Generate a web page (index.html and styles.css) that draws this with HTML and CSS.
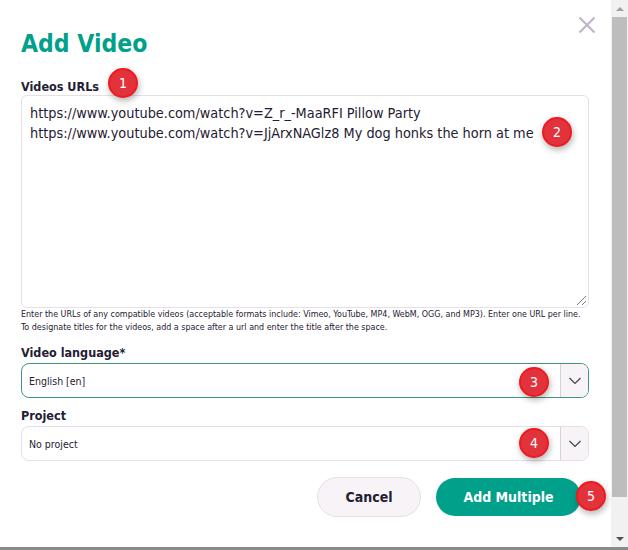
FILE: index.html
```html
<!DOCTYPE html>
<html lang="en">
<head>
<meta charset="utf-8">
<title>Add Video</title>
<link rel="stylesheet" href="styles.css">
</head>
<body>
<div class="viewport">
  <div class="modal">
    <button class="close" aria-label="Close">
      <svg width="18" height="18" viewBox="0 0 18 18"><path d="M1.5 1.5L16.5 16.5M16.5 1.5L1.5 16.5"/></svg>
    </button>
    <h1 class="title">Add Video</h1>
    <label class="label label-urls">Videos URLs</label>
    <div class="textarea">
      <div class="line">https://www.youtube.com/watch?v=Z_r_-MaaRFI Pillow Party</div>
      <div class="line">https://www.youtube.com/watch?v=JjArxNAGlz8 My dog honks the horn at me</div>
      <svg class="grip" width="11" height="11" viewBox="0 0 11 11"><path d="M1 10L10 1M6 10L10 6"/></svg>
    </div>
    <p class="help">Enter the URLs of any compatible videos (acceptable formats include: Vimeo, YouTube, MP4, WebM, OGG, and MP3). Enter one URL per line. To designate titles for the videos, add a space after a url and enter the title after the space.</p>
    <label class="label label-lang">Video language*</label>
    <div class="select select-active">
      <span class="select-value">English [en]</span>
      <span class="select-arrow"><svg width="14" height="8" viewBox="0 0 14 8"><path d="M1.5 1L7 6.5L12.5 1"/></svg></span>
    </div>
    <label class="label label-project">Project</label>
    <div class="select">
      <span class="select-value">No project</span>
      <span class="select-arrow"><svg width="14" height="8" viewBox="0 0 14 8"><path d="M1.5 1L7 6.5L12.5 1"/></svg></span>
    </div>
    <div class="actions">
      <button class="btn btn-cancel">Cancel</button>
      <button class="btn btn-primary">Add Multiple</button>
    </div>
    <span class="badge badge-1">1</span>
    <span class="badge badge-2">2</span>
    <span class="badge badge-3">3</span>
    <span class="badge badge-4">4</span>
    <span class="badge badge-5">5</span>
  </div>
  <div class="scrollbar">
    <span class="arrow arrow-up"></span>
    <span class="thumb"></span>
    <span class="arrow arrow-down"></span>
  </div>
</div>
</body>
</html>
```
FILE: styles.css
```css
* { box-sizing: border-box; }
html, body { margin: 0; padding: 0; height: 100%; overflow: hidden; }
body {
  background: #8a8a8a;
  font-family: "DejaVu Sans", sans-serif;
  font-stretch: condensed;
  color: #1f2033;
}
.viewport {
  display: flex;
  width: 628px;
  height: 547px;
  background: #fff;
}
.modal {
  position: relative;
  width: 611px;
  height: 547px;
  padding: 0 22px 0 21px;
  background: #fff;
  border-radius: 8px 0 0 8px;
}
.close {
  position: absolute;
  top: 16px;
  left: 578px;
  width: 18px;
  height: 18px;
  padding: 0;
  border: 0;
  background: none;
  display: block;
}
.close svg { display: block; }
.close path { fill: none; stroke: #c2b3ca; stroke-width: 2.2; }
.title {
  margin: 0;
  padding-top: 26px;
  font-size: 24.5px;
  line-height: 36px;
  font-weight: 700;
  color: #00a08a;
}
.label {
  display: block;
  height: 18px;
  font-size: 12.5px;
  font-weight: 700;
  line-height: 20px;
  color: #1f2033;
}
.label-urls { margin-top: 15px; }
.textarea {
  position: relative;
  height: 213px;
  padding: 7px 8px;
  border: 1px solid #e6dfe6;
  border-radius: 6px;
  background: #fff;
  font-size: 14.35px;
  line-height: 20px;
  color: #1f2033;
}
.line { white-space: nowrap; }
.grip { position: absolute; right: 1px; bottom: 1px; }
.grip path { fill: none; stroke: #777; stroke-width: 1; }
.help {
  margin: 0;
  width: 568px;
  font-size: 8.9px;
  line-height: 13px;
  color: #1f2033;
}
.label-lang { margin-top: 9px; }
.label-project { margin-top: 8px; }
.select {
  display: flex;
  align-items: stretch;
  height: 35px;
  margin-top: 2px;
  border: 1px solid #e6dfe6;
  border-radius: 8px;
  overflow: hidden;
  background: #fff;
}
.select-active { border-color: #3f9580; }
.select-value {
  flex: 1;
  padding-left: 7px;
  font-size: 10.5px;
  line-height: 35px;
  color: #1f2033;
}
.select-arrow {
  display: flex;
  align-items: center;
  justify-content: center;
  width: 28px;
  background: #f7f3f7;
  border-left: 1px solid #d8d2d8;
}
.select-arrow svg { display: block; }
.select-arrow path { fill: none; stroke: #3a4658; stroke-width: 1.2; }
.actions {
  display: flex;
  justify-content: flex-end;
  gap: 15px;
  margin-top: 16px;
  padding-right: 8px;
}
.btn {
  font-family: inherit;
  font-stretch: inherit;
  font-size: 14px;
  font-weight: 700;
  border-radius: 20px;
}
.btn-cancel {
  width: 104px;
  height: 40px;
  background: #f7f3f7;
  border: 1px solid #e6dfe6;
  color: #1f2033;
}
.btn-primary {
  width: 145px;
  height: 38px;
  margin-top: 1px;
  background: #00a08a;
  border: 0;
  color: #fff;
}
.badge {
  position: absolute;
  width: 30px;
  height: 30px;
  border-radius: 50%;
  background: #e2323c;
  border: 2px solid #f0191f;
  box-shadow: 1px 3px 6px rgba(0, 0, 0, 0.3);
  color: #fff;
  font-size: 14px;
  line-height: 26px;
  text-align: center;
}
.badge-1 { left: 108px; top: 68px; }
.badge-2 { left: 542px; top: 117px; }
.badge-3 { left: 519px; top: 367px; }
.badge-4 { left: 519px; top: 428px; }
.badge-5 { left: 576px; top: 481px; }
.scrollbar {
  position: relative;
  display: flex;
  flex-direction: column;
  align-items: center;
  width: 17px;
  background: #f1f1f1;
}
.thumb {
  display: block;
  width: 15px;
  height: 480px;
  background: #bdbdbd;
}
.arrow {
  display: block;
  width: 0;
  height: 0;
  border-left: 4px solid transparent;
  border-right: 4px solid transparent;
}
.arrow-up { margin: 7px 0 6px; border-bottom: 4px solid #a0a0a0; }
.arrow-down { margin-top: auto; margin-bottom: 6px; border-top: 4px solid #505050; }
```
